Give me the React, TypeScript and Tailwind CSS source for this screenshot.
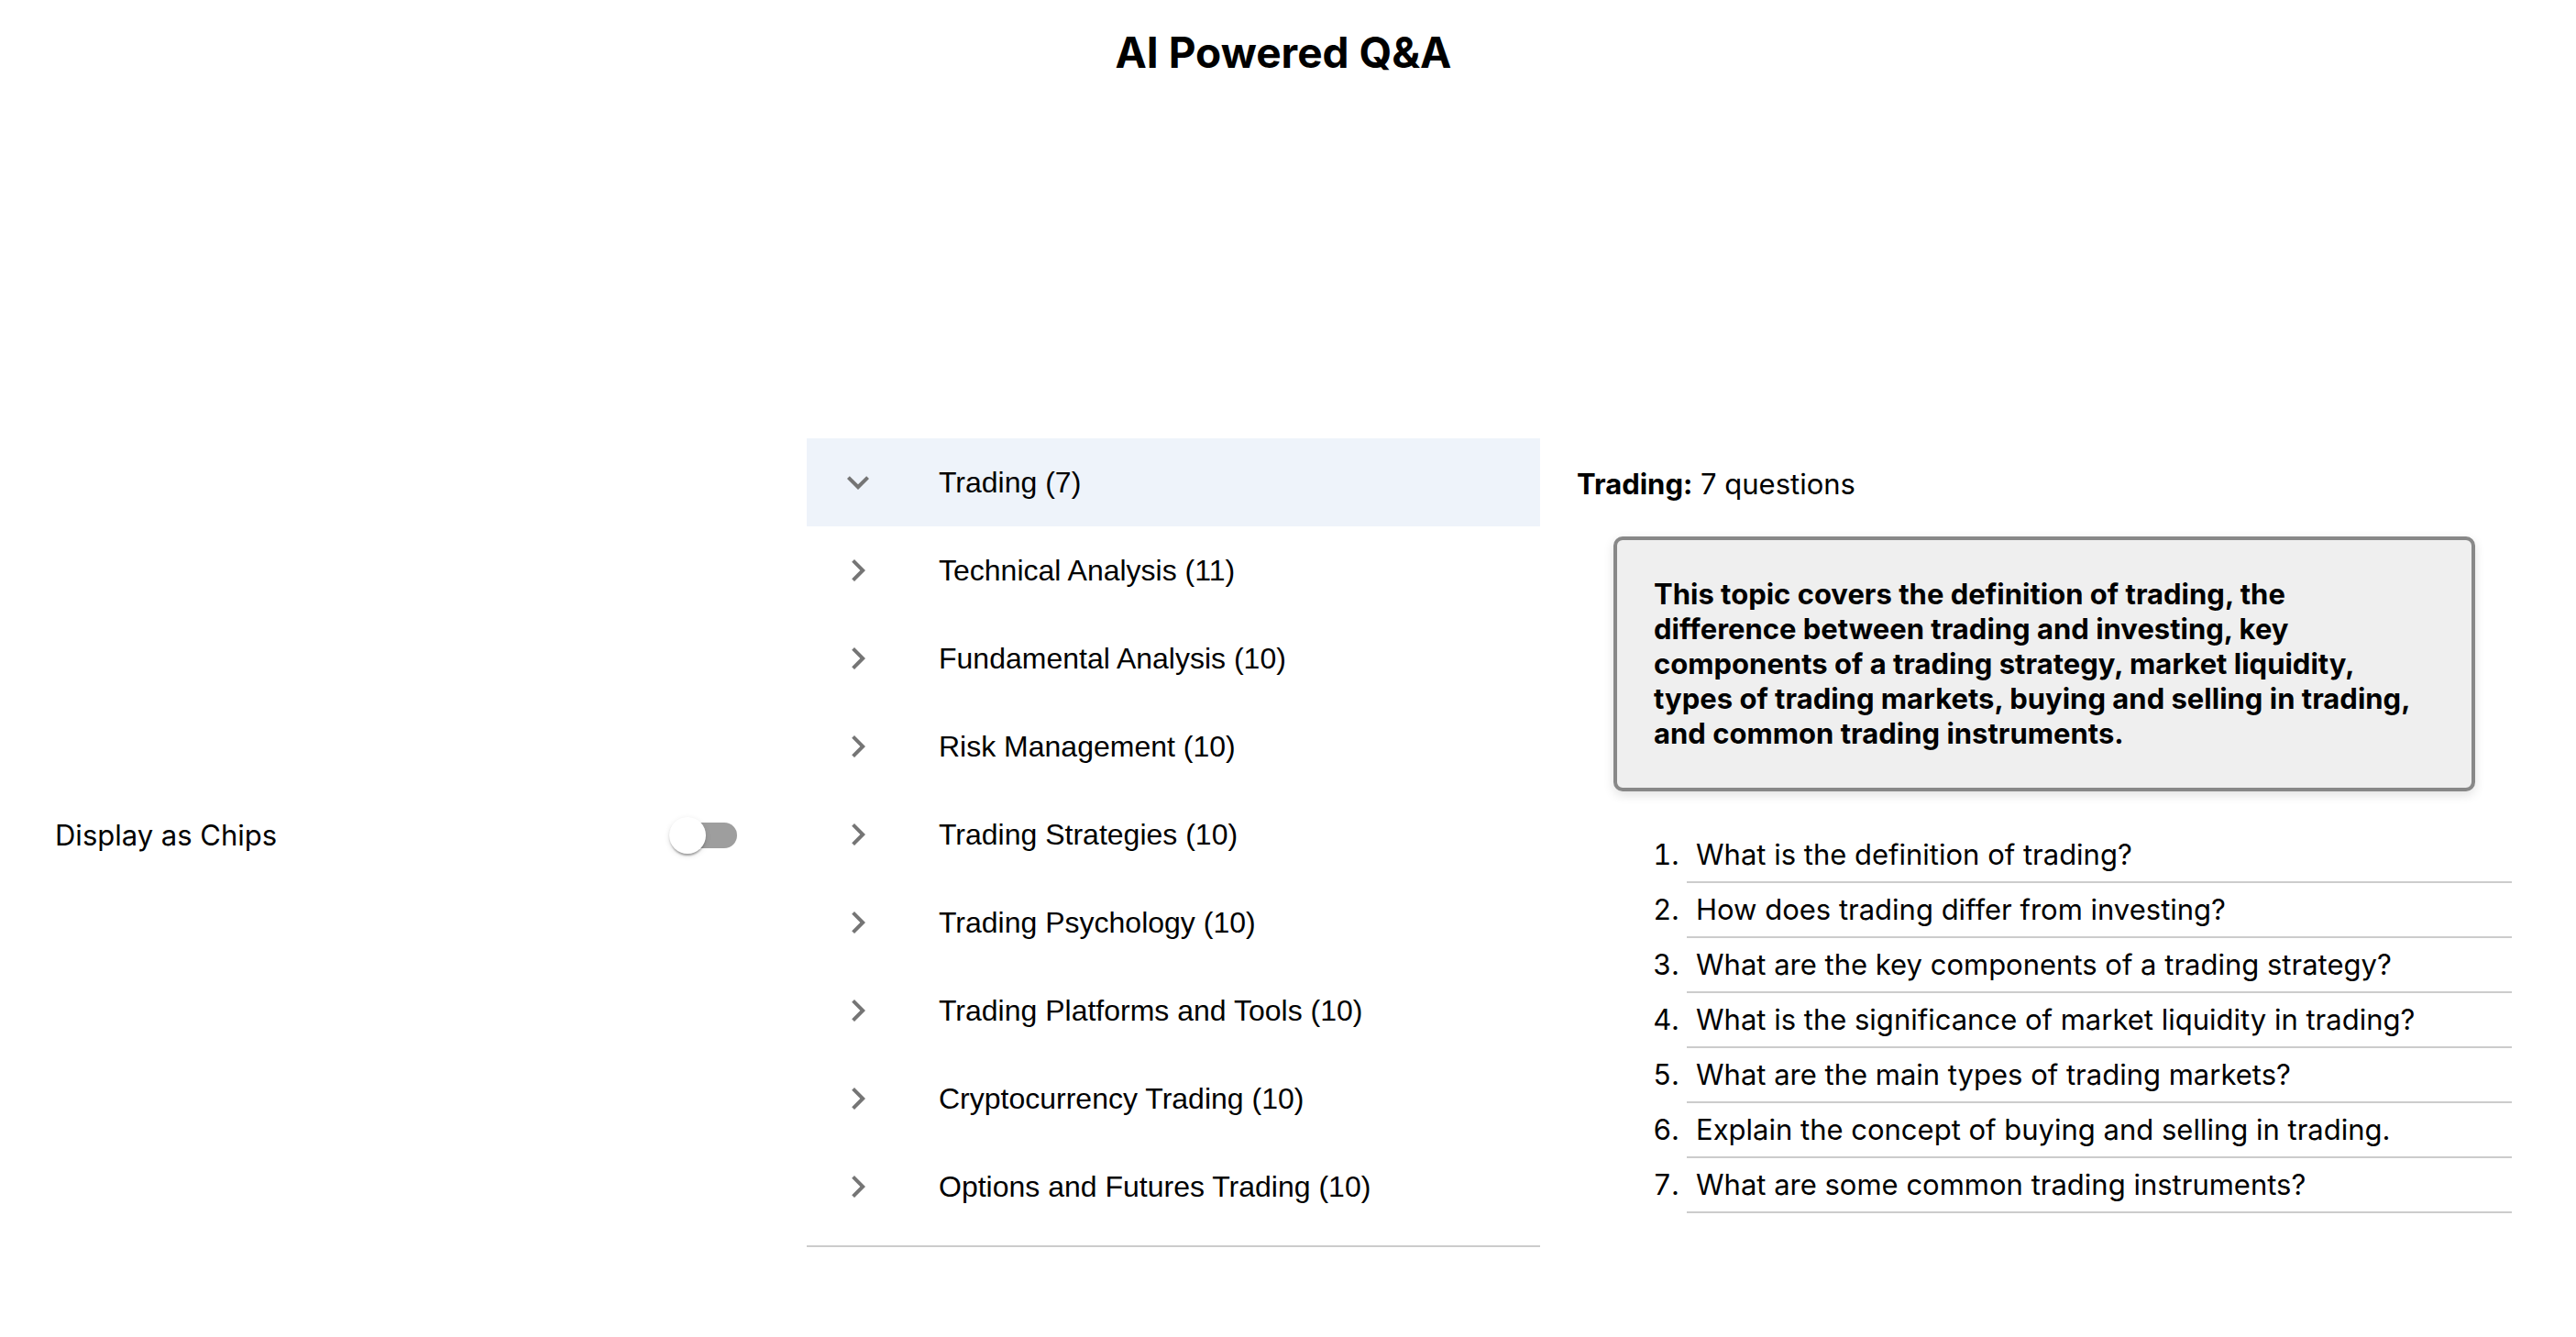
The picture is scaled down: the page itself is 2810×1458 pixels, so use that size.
import { useState } from "react";

const topics = [
  { name: "Trading", count: 7 },
  { name: "Technical Analysis", count: 11 },
  { name: "Fundamental Analysis", count: 10 },
  { name: "Risk Management", count: 10 },
  { name: "Trading Strategies", count: 10 },
  { name: "Trading Psychology", count: 10 },
  { name: "Trading Platforms and Tools", count: 10 },
  { name: "Cryptocurrency Trading", count: 10 },
  { name: "Options and Futures Trading", count: 10 },
];

const questions = [
  "What is the definition of trading?",
  "How does trading differ from investing?",
  "What are the key components of a trading strategy?",
  "What is the significance of market liquidity in trading?",
  "What are the main types of trading markets?",
  "Explain the concept of buying and selling in trading.",
  "What are some common trading instruments?",
];

function Chevron({ open }: { open: boolean }) {
  return (
    <svg viewBox="0 0 24 24" className="size-12 shrink-0 fill-[#757575]" aria-hidden="true">
      {open ? (
        <path d="M16.59 8.59 12 13.17 7.41 8.59 6 10l6 6 6-6z" />
      ) : (
        <path d="M10 6 8.59 7.41 13.17 12l-4.58 4.59L10 18l6-6z" />
      )}
    </svg>
  );
}

function ChipsSwitch() {
  const [on, setOn] = useState(false);
  return (
    <div className="flex items-center justify-between pb-4 pr-19">
      <label htmlFor="chips">Display as Chips</label>
      <span className="relative flex h-10 w-[74px] items-center justify-end">
        <input
          id="chips"
          type="checkbox"
          role="switch"
          checked={on}
          onChange={(e) => setOn(e.target.checked)}
          className="peer absolute inset-0 z-10 cursor-pointer opacity-0"
        />
        <span className="h-7 w-[68px] rounded-full bg-[#9e9e9e] peer-checked:bg-blue-300" />
        <span className="absolute left-0 size-10 rounded-full bg-white shadow-[0_4px_2px_-2px_rgba(0,0,0,0.2),0_2px_2px_rgba(0,0,0,0.14),0_2px_6px_rgba(0,0,0,0.12)] peer-checked:left-[34px]" />
      </span>
    </div>
  );
}

export default function App() {
  const [selected, setSelected] = useState(0);
  return (
    <div className="min-h-screen bg-white pr-[10px] font-['Inter',sans-serif] text-[31px] leading-[38px] text-black">
      <h1 className="pt-7 text-center text-[46px] leading-[58px] font-bold">AI Powered Q&amp;A</h1>
      <main className="grid grid-cols-[820fr_800fr_1060fr] px-[60px] pt-98">
        <ChipsSwitch />
        <nav aria-label="Topics" className="border-b-2 border-[#cccccc] pb-4">
          <ul className="font-['Liberation_Sans',sans-serif] text-[32px]">
            {topics.map((topic, i) => (
              <li key={topic.name}>
                <button
                  type="button"
                  aria-expanded={i === selected}
                  onClick={() => setSelected(i)}
                  className={
                    i === selected
                      ? "flex h-24 w-full items-center gap-16 bg-[#eef3fa] pl-8 text-left"
                      : "flex h-24 w-full items-center gap-16 pl-8 text-left"
                  }
                >
                  <Chevron open={i === selected} />
                  {topic.name} ({topic.count})
                </button>
              </li>
            ))}
          </ul>
        </nav>
        <section className="pt-[31px] pl-10">
          <h2>
            <strong className="font-bold">Trading:</strong> 7 questions
          </h2>
          <div className="px-10 pt-[38px] pb-10">
            <button
              type="button"
              className="block w-full rounded-[10px] border-4 border-[#888888] bg-[#efefef] py-10 pr-12 pl-10 text-left font-bold shadow-[0_4px_12px_rgba(0,0,0,0.12)]"
            >
              This topic covers the definition of trading, the difference between trading and
              investing, key components of a trading strategy, market liquidity, types of trading
              markets, buying and selling in trading, and common trading instruments.
            </button>
          </div>
          <ol className="list-decimal pl-30">
            {questions.map((q) => (
              <li key={q} className="border-b-2 border-[#cccccc] py-[10px] pl-[10px]">
                {q}
              </li>
            ))}
          </ol>
        </section>
      </main>
    </div>
  );
}
